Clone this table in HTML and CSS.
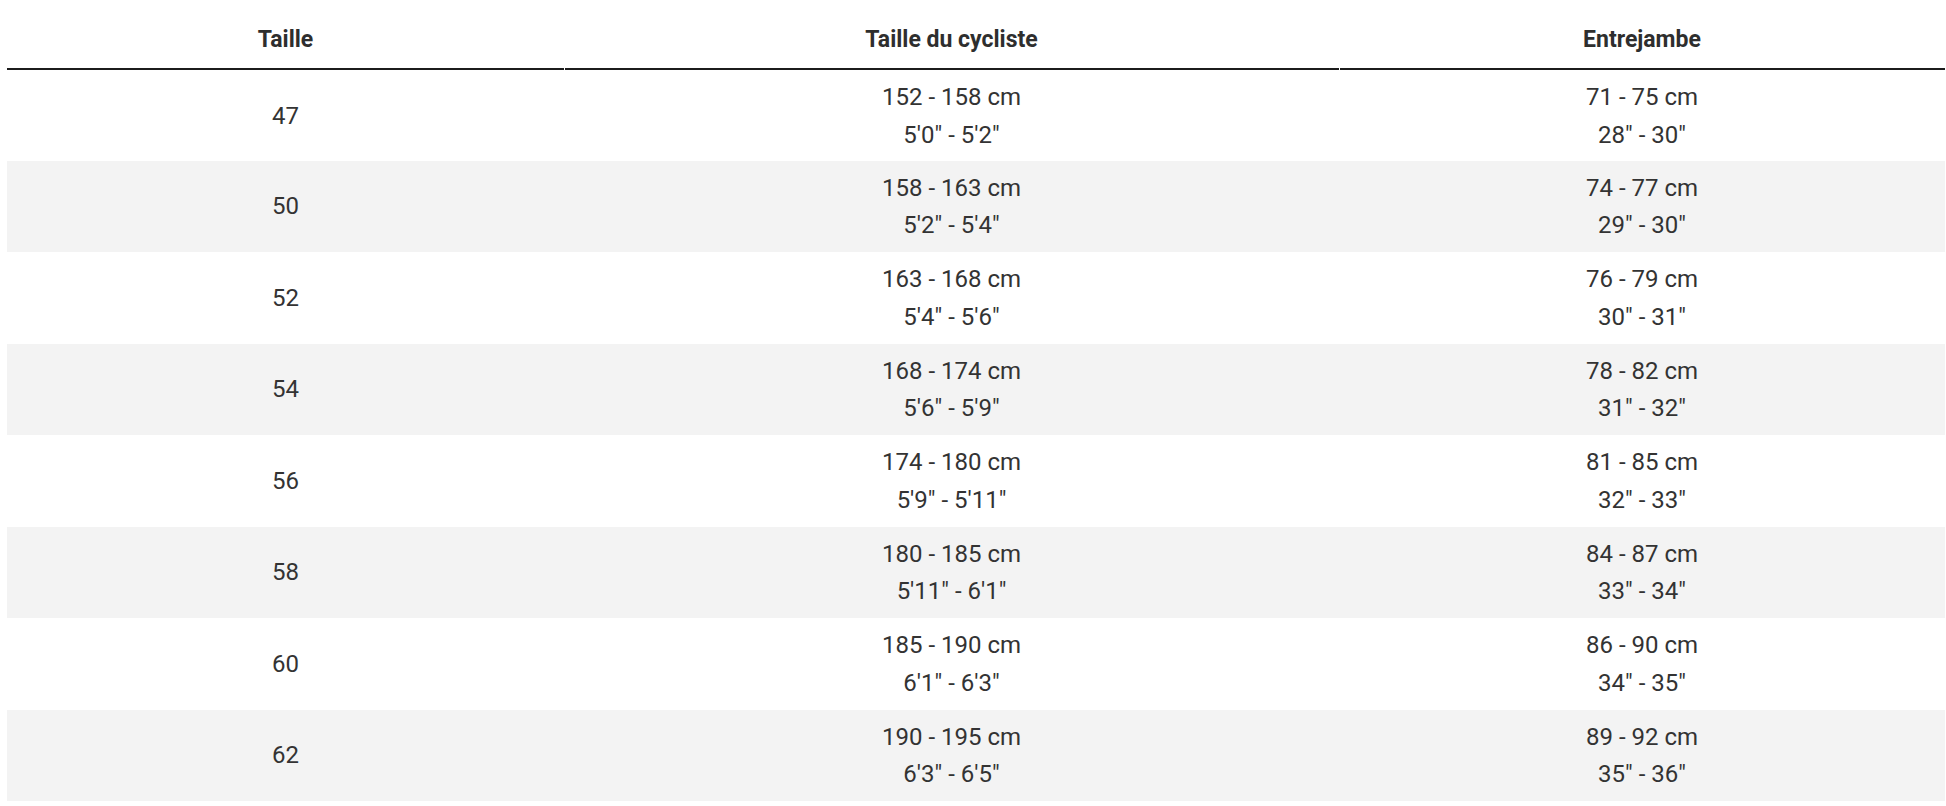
FILE: index.html
```html
<!DOCTYPE html>
<html lang="fr">
<head>
<meta charset="utf-8">
<title>Tailles</title>
<link rel="stylesheet" href="styles.css">
</head>
<body>
<table class="size-table">
  <colgroup>
    <col class="col-size">
    <col class="col-height">
    <col class="col-inseam">
  </colgroup>
  <thead>
    <tr>
      <th>Taille</th>
      <th>Taille du cycliste</th>
      <th>Entrejambe</th>
    </tr>
  </thead>
  <tbody>
    <tr><td>47</td><td>152 - 158 cm<br>5'0" - 5'2"</td><td>71 - 75 cm<br>28" - 30"</td></tr>
    <tr><td>50</td><td>158 - 163 cm<br>5'2" - 5'4"</td><td>74 - 77 cm<br>29" - 30"</td></tr>
    <tr><td>52</td><td>163 - 168 cm<br>5'4" - 5'6"</td><td>76 - 79 cm<br>30" - 31"</td></tr>
    <tr><td>54</td><td>168 - 174 cm<br>5'6" - 5'9"</td><td>78 - 82 cm<br>31" - 32"</td></tr>
    <tr><td>56</td><td>174 - 180 cm<br>5'9" - 5'11"</td><td>81 - 85 cm<br>32" - 33"</td></tr>
    <tr><td>58</td><td>180 - 185 cm<br>5'11" - 6'1"</td><td>84 - 87 cm<br>33" - 34"</td></tr>
    <tr><td>60</td><td>185 - 190 cm<br>6'1" - 6'3"</td><td>86 - 90 cm<br>34" - 35"</td></tr>
    <tr><td>62</td><td>190 - 195 cm<br>6'3" - 6'5"</td><td>89 - 92 cm<br>35" - 36"</td></tr>
  </tbody>
</table>
</body>
</html>
```

FILE: styles.css
```css
html, body {
  margin: 0;
  padding: 0;
  background: #fff;
}

body {
  font-family: Roboto, "Liberation Sans", sans-serif;
  color: #333;
}

.size-table {
  margin-left: 7px;
  width: 1938px;
  border-collapse: separate;
  border-spacing: 0;
  table-layout: fixed;
}

.col-size { width: 557px; }
.col-height { width: 775px; }
.col-inseam { width: 606px; }

.size-table th {
  font-weight: 700;
  font-size: 23px;
  line-height: 38px;
  padding: 21px 0 11px;
  text-align: center;
  color: #2e2e2e;
  background-image: linear-gradient(#1c1c1c, #1c1c1c);
  background-repeat: no-repeat;
  background-position: left bottom;
  background-size: 100% 2px;
}

.size-table th + th {
  background-position: right bottom;
  background-size: calc(100% - 1px) 2px;
}

.size-table td {
  font-size: 24px;
  line-height: 37.75px;
  padding: 9px 0 7px;
  text-align: center;
  vertical-align: middle;
}

.size-table tbody tr:first-child td {
  padding-bottom: 6px;
}

.size-table tbody tr:nth-child(even) td {
  background: #f3f3f3;
}
```
